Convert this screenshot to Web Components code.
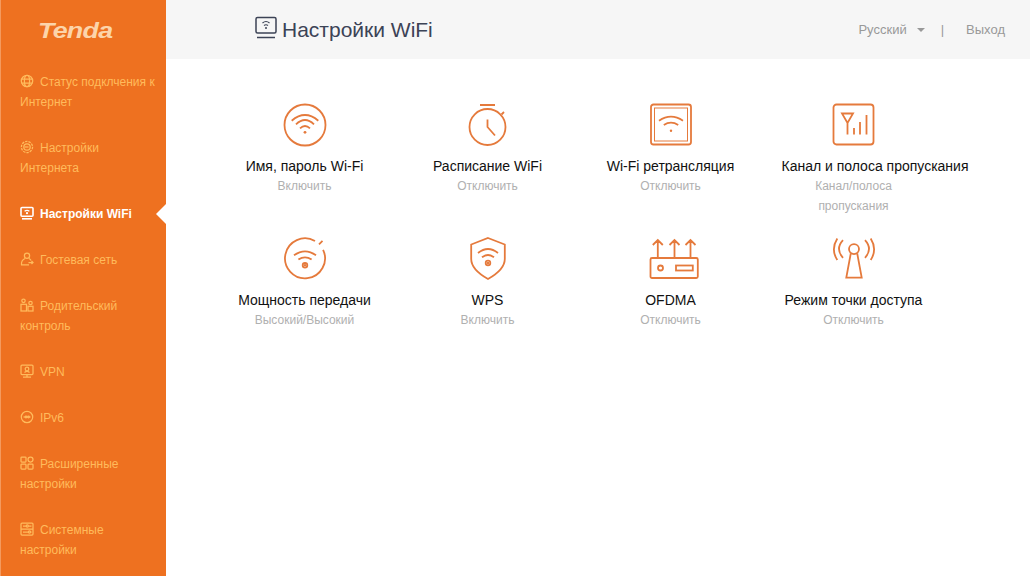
<!DOCTYPE html>
<html lang="ru">
<head>
<meta charset="utf-8">
<title>Tenda</title>
<style>
    html, body { margin: 0; padding: 0; height: 100%; background: #fff; overflow: hidden; }
    body { font-family: "Liberation Sans", Arial, sans-serif; }
</style>
</head>
<body>
<tenda-app></tenda-app>

<script>
// small wifi mark used by most of the icons. cx / y = position of the dot
function wifi(cx, y, w, extra) {
    const a = w, b = w * 0.6;
    const dot = extra === 'ring'
        ? `<circle cx="${cx}" cy="${y}" r="2.2"/>`
        : `<circle cx="${cx}" cy="${y}" r="1.2" fill="currentColor" stroke="none"/>`;
    return `<path d="M${cx - a} ${y - 10}Q${cx} ${y - 18} ${cx + a} ${y - 10}"/>
            <path d="M${cx - b} ${y - 5.7}Q${cx} ${y - 10.3} ${cx + b} ${y - 5.7}"/>${dot}`;
}

const NAV_ICONS = {
    globe: `<circle cx="7" cy="7" r="5.7"/><ellipse cx="7" cy="7" rx="2.6" ry="5.7"/><path d="M1.5 5h11M1.5 9h11"/>`,
    net: `<circle cx="7" cy="7" r="5.6" stroke-dasharray="2.4 1"/><circle cx="7" cy="7" r="3.2"/><path d="M4.5 7h4"/>`,
    wifi: `<rect x="1" y="1.5" width="12" height="8.8" rx="1" stroke-width="1.6"/><path d="M2 12.8h10" stroke-width="1.6"/><path d="M4.6 5.2Q7 3.4 9.4 5.2" stroke-width="1.3"/><circle cx="7" cy="7.2" r="1.1" fill="currentColor" stroke="none"/>`,
    guest: `<circle cx="7" cy="3.800" r="2.600"/><path d="M5 6.500Q1 8.500 1.500 12.800H9"/><path d="M9 6.500Q10.500 7.300 11 8.500M8.500 10.500h4.500M11.500 9l1.500 1.500-1.500 1.500"/>`,
    parent: `<circle cx="3.500" cy="2.800" r="1.700"/><circle cx="10.500" cy="5" r="1.700"/><rect x="1" y="6.300" width="5.500" height="6.700"/><rect x="8" y="8.300" width="5" height="4.700"/>`,
    vpn: `<rect x="1" y="1" width="12" height="9.500" rx="1"/><path d="M7 10.500V13M3 13h8"/><circle cx="7" cy="5" r="1.800"/><path d="M4.500 8.500Q7 6.300 9.500 8.500"/>`,
    ipv6: `<circle cx="7" cy="7" r="5.700"/><path d="M3.500 7h7"/><circle cx="6" cy="7" r=".8"/><circle cx="8.500" cy="7" r=".8"/>`,
    grid: `<rect x="1" y="1" width="5" height="5" rx=".8"/><rect x="8" y="1" width="5" height="5" rx="2.400"/><rect x="1" y="8" width="5" height="5" rx=".8"/><rect x="8" y="8" width="5" height="5" rx=".8"/>`,
    system: `<rect x="1" y="1" width="12" height="12" rx="1"/><path d="M1 7h12M3 4h3M8.500 4h3M3 10h5.500M10.500 10h1"/><circle cx="7.300" cy="4" r="1.100"/><circle cx="9.500" cy="10" r="1.100"/>`
};

const TILE_ICONS = {
    name: `<svg width="44" height="44" viewBox="0 0 44 44"><circle cx="22" cy="22" r="20.500"/>
        <path d="M8.700 17.700Q22 6.300 35.300 17.700M13 21.300Q22 12.700 31 21.300M17 25.300Q22 20.700 27 25.300"/>
        <circle cx="22" cy="29.300" r="1.400" fill="currentColor" stroke="none"/></svg>`,
    clock: `<svg width="44" height="44" viewBox="0 0 44 44"><circle cx="21.500" cy="24" r="18"/><path d="M14 2h15M35.500 11.500l2.500-2.500M21.500 16.500V24l7.500 8.500"/></svg>`,
    repeater: `<svg width="44" height="44" viewBox="0 0 44 44"><rect x="2" y="1.500" width="40" height="40" rx="2.500"/><rect x="5.500" y="5" width="33" height="33" stroke-width="1"/>${wifi(22, 27.700, 12)}</svg>`,
    channel: `<svg width="44" height="44" viewBox="0 0 44 44"><rect x="1.500" y="1.500" width="40" height="40" rx="3"/><path d="M10 10.500h11l-5.500 9.500zM15.500 20v11.500M22 25v6.500M28 19v12.500M34.500 12v19.500"/></svg>`,
    power: `<svg width="44" height="44" viewBox="0 .7 44 44"><path d="M32 4.700A20 20 0 1 0 40.100 13.500M36 8l3.500-3.500"/>${wifi(22, 29, 11)}<circle cx="22" cy="29" r="2.300"/></svg>`,
    shield: `<svg width="44" height="44" viewBox="0 1 44 44"><path d="M22 2L38.800 8.500V23C38.800 32 30 38.500 22 43 14 38.500 5.200 32 5.200 23V8.500Z"/>${wifi(22, 27, 10)}<circle cx="22" cy="27" r="2.300"/></svg>`,
    router: `<svg width="50" height="44" viewBox="0 0 50 44" style="margin-left:6px"><rect x="1.500" y="21" width="47.300" height="20" rx="1.500"/><path d="M8.800 21V3M3.800 8l5-5 5 5M25.500 21V3M20.500 8l5-5 5 5M41.500 21V3M36.500 8l5-5 5 5"/><circle cx="11.500" cy="31" r="2.500"/><rect x="27" y="28.500" width="16.800" height="5"/></svg>`,
    antenna: `<svg width="44" height="44" viewBox="0 1.200 44 44"><circle cx="22" cy="13.300" r="5"/><path d="M18.800 17.500L14.300 41.800H29.700L25.200 17.500M11 4.300Q3 13 11 22M33 4.300Q41 13 33 22M5.300 2.700Q-1.500 13.500 5.300 24.300M38.700 2.700Q45.500 13.500 38.700 24.300"/></svg>`
};

class NavItem extends HTMLElement {
    constructor() {
        super();
        const icon = NAV_ICONS[this.getAttribute('icon')] || '';
        this.shadow = this.attachShadow({mode: 'open'});
        this.shadow.innerHTML = `<style>
            :host {
                display: block;
                position: relative;
                padding: 13px 8px 13px 20px;
                font-size: 12px;
                line-height: 20px;
                color: #ffbb5c;
            }
            :host([active]) {
                color: #fff;
                font-weight: bold;
            }
            /* pointer towards the content area */
            :host([active])::after {
                content: "";
                position: absolute;
                right: 0;
                top: 13px;
                border: 10px solid transparent;
                border-left-width: 0;
                border-right-color: #fff;
            }
            svg {
                width: 14px;
                height: 14px;
                margin-right: 6px;
                vertical-align: -2px;
                fill: none;
                stroke: currentColor;
                stroke-width: 1.25;
            }
        </style><svg viewBox="0 0 14 14">${icon}</svg><slot></slot>`;
    }
}
customElements.define('nav-item', NavItem);

class SideBar extends HTMLElement {
    constructor() {
        super();
        this.attachShadow({mode: 'open'}).innerHTML = `<style>
            :host {
                display: block;
                flex: 0 0 166px;
                width: 166px;
                background: #ee7120;
                box-shadow: inset 1px 0 #f49a5e;
            }
            #logo {
                height: 59px;
                box-sizing: border-box;
                padding-left: 38px;
                display: flex;
                align-items: center;
                font: italic bold 22px/1 "Liberation Sans", sans-serif;
                letter-spacing: -.6px;
                color: #fcd4aa;
            }
            #logo span {
                display: inline-block;
                transform: scaleX(1.22);
                transform-origin: left center;
                margin-top: 2px;
            }
        </style>
        <div id="logo"><span>Tenda</span></div>
        <slot></slot>`;
    }
}
customElements.define('side-bar', SideBar);

class TopBar extends HTMLElement {
    constructor() {
        super();
        this.attachShadow({mode: 'open'}).innerHTML = `<style>
            :host {
                display: flex;
                align-items: center;
                height: 59px;
                background: #f6f6f6;
                padding: 0 25px 0 88px;
            }
            svg.title-icon {
                width: 24px;
                height: 24px;
                margin: -4px 4px 0 0;
                fill: none;
                stroke: #3c4356;
                stroke-width: 1.5;
                color: #3c4356;
            }
            h1 {
                margin: 0;
                font-size: 21px;
                font-weight: normal;
                color: #3c4356;
                flex: 1;
            }
            .lang, .logout, .sep {
                font-size: 13px;
                color: #999;
            }
            .arrow {
                width: 0;
                height: 0;
                margin: 1px 16px 0 10px;
                border: 4px solid transparent;
                border-top-color: #999;
                border-bottom-width: 0;
            }
            .sep { margin-right: 22px; }
        </style>
        <svg class="title-icon" viewBox="0 0 24 24">
            <rect x="2" y="1.500" width="20" height="15.500" rx="1.500"/>
            <path d="M3 21.500h18"/>
            <path d="M8.500 7Q12 4 15.500 7M10 9.500Q12 8 14 9.500" stroke-width="1.100"/>
            <circle cx="12" cy="12" r="1" fill="currentColor" stroke="none"/>
        </svg>
        <h1><slot></slot></h1>
        <span class="lang">Русский</span><span class="arrow"></span>
        <span class="sep">|</span><span class="logout">Выход</span>`;
    }
}
customElements.define('top-bar', TopBar);

class WifiTile extends HTMLElement {
    constructor() {
        super();
        const icon = TILE_ICONS[this.getAttribute('icon')] || '';
        this.attachShadow({mode: 'open'}).innerHTML = `<style>
            :host {
                display: block;
                width: 144px;
                justify-self: center;
                text-align: center;
            }
            .icon {
                height: 44px;
                margin-bottom: 9px;
                fill: none;
                stroke: #e57a3c;
                stroke-width: 1.8;
                color: #e57a3c;
            }
            .title {
                font-size: 14px;
                line-height: 20px;
                color: #111;
                white-space: nowrap;
            }
            .sub {
                font-size: 12px;
                line-height: 20px;
                color: #b0b0b0;
            }
        </style>
        <div class="icon">${icon}</div>
        <div class="title">${this.getAttribute('label')}</div>
        <div class="sub"><slot></slot></div>`;
    }
}
customElements.define('wifi-tile', WifiTile);

class TendaApp extends HTMLElement {
    constructor() {
        super();
        this.attachShadow({mode: 'open'}).innerHTML = `<style>
            :host {
                display: flex;
                height: 576px;
                font-family: "Liberation Sans", Arial, sans-serif;
            }
            main { flex: 1; min-width: 0; }
            #tiles {
                display: grid;
                grid-template-columns: repeat(4, 183px);
                row-gap: 21px;
                padding: 44px 0 0 47px;
            }
        </style>
        <side-bar>
            <nav-item icon="globe">Статус подклчения к Интернет</nav-item>
            <nav-item icon="net">Настройки Интернета</nav-item>
            <nav-item icon="wifi" active>Настройки WiFi</nav-item>
            <nav-item icon="guest">Гостевая сеть</nav-item>
            <nav-item icon="parent">Родительский контроль</nav-item>
            <nav-item icon="vpn">VPN</nav-item>
            <nav-item icon="ipv6">IPv6</nav-item>
            <nav-item icon="grid">Расширенные настройки</nav-item>
            <nav-item icon="system">Системные настройки</nav-item>
        </side-bar>
        <main>
            <top-bar>Настройки WiFi</top-bar>
            <div id="tiles">
                <wifi-tile icon="name" label="Имя, пароль Wi-Fi">Включить</wifi-tile>
                <wifi-tile icon="clock" label="Расписание WiFi">Отключить</wifi-tile>
                <wifi-tile icon="repeater" label="Wi-Fi ретрансляция">Отключить</wifi-tile>
                <wifi-tile icon="channel" label="Канал и полоса пропускания">Канал/полоса пропускания</wifi-tile>
                <wifi-tile icon="power" label="Мощность передачи">Высокий/Высокий</wifi-tile>
                <wifi-tile icon="shield" label="WPS">Включить</wifi-tile>
                <wifi-tile icon="router" label="OFDMA">Отключить</wifi-tile>
                <wifi-tile icon="antenna" label="Режим точки доступа">Отключить</wifi-tile>
            </div>
        </main>`;
    }
}
customElements.define('tenda-app', TendaApp);
</script>
</body>
</html>
